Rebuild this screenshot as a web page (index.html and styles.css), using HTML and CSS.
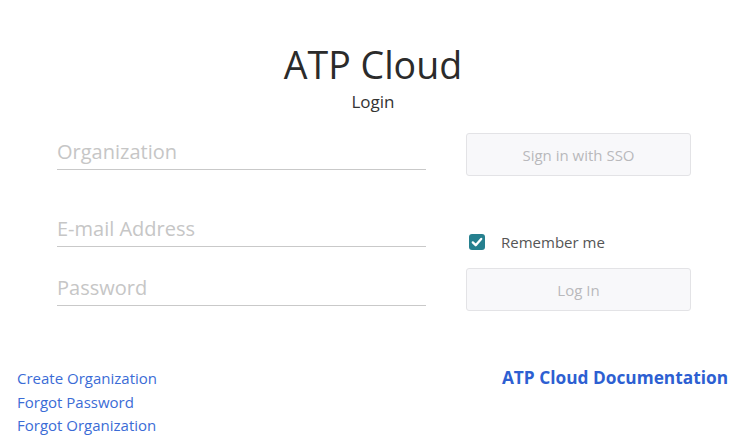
FILE: index.html
```html
<!DOCTYPE html>
<html lang="en">
<head>
<meta charset="utf-8">
<title>ATP Cloud – Login</title>
<link rel="stylesheet" href="styles.css">
</head>
<body>
  <main class="page">
    <header class="brand">
      <h1 class="brand-title">ATP Cloud</h1>
      <p class="brand-sub">Login</p>
    </header>

    <form class="login-form" onsubmit="return false">
      <div class="col col-fields">
        <input class="field field-org" type="text" placeholder="Organization">
        <input class="field field-email" type="email" placeholder="E-mail Address">
        <input class="field field-pass" type="password" placeholder="Password">
      </div>
      <div class="col col-actions">
        <button class="btn btn-sso" type="button" disabled>Sign in with SSO</button>
        <label class="remember">
          <span class="check" aria-hidden="true">
            <svg viewBox="0 0 16 16" width="16" height="16"><path d="M3.8 8.4 L6.7 11.2 L12.2 4.9" fill="none" stroke="#fff" stroke-width="2.3" stroke-linecap="round" stroke-linejoin="round"/></svg>
          </span>
          <span class="remember-text">Remember me</span>
        </label>
        <button class="btn btn-login" type="submit" disabled>Log In</button>
      </div>
    </form>

    <footer class="links">
      <nav class="links-left">
        <a href="#">Create Organization</a>
        <a href="#">Forgot Password</a>
        <a href="#">Forgot Organization</a>
      </nav>
      <a class="doc-link" href="#">ATP Cloud Documentation</a>
    </footer>
  </main>
</body>
</html>
```

FILE: styles.css
```css
* {
  box-sizing: border-box;
}

html, body {
  margin: 0;
  padding: 0;
  background: #fff;
}

body {
  font-family: "Open Sans", "Noto Sans", sans-serif;
  color: #333;
  width: 750px;
  height: 445px;
  overflow: hidden;
}

.page {
  display: flex;
  flex-direction: column;
  padding-top: 41px;
}

/* heading */
.brand {
  display: flex;
  flex-direction: column;
  align-items: center;
  padding-right: 4px;
}

.brand-title {
  margin: 0;
  font-size: 37.5px;
  line-height: 47px;
  font-weight: 400;
  color: #2b2b2b;
}

.brand-sub {
  margin: 2px 0 0;
  font-size: 17px;
  line-height: 23px;
  color: #333;
}

/* form */
.login-form {
  display: flex;
  gap: 40px;
  padding-left: 57px;
  margin-top: 20px;
}

.col {
  display: flex;
  flex-direction: column;
}

.col-fields {
  width: 369px;
}

.col-actions {
  width: 225px;
}

.field {
  display: block;
  width: 100%;
  height: 37px;
  padding: 0;
  border: none;
  border-bottom: 1px solid #c9c9c9;
  font-family: inherit;
  font-size: 20px;
  color: #333;
  background: transparent;
  outline: none;
}

.field::placeholder {
  color: #c6c6c6;
  opacity: 1;
}

.field-email {
  margin-top: 40px;
}

.field-pass {
  margin-top: 22px;
}

.btn {
  display: block;
  width: 225px;
  height: 43px;
  padding: 0;
  border: 1px solid #e3e3e6;
  border-radius: 3px;
  background: #f8f8fa;
  font-family: inherit;
  font-size: 15px;
  color: #b9b9bc;
}

.remember {
  display: flex;
  align-items: center;
  margin-top: 58px;
  padding-left: 3px;
  height: 16px;
  cursor: pointer;
}

.check {
  display: flex;
  width: 16px;
  height: 16px;
  border-radius: 3px;
  background: #26808f;
}

.remember-text {
  margin-left: 16px;
  font-size: 15px;
  line-height: 16px;
  color: #555;
}

.btn-login {
  margin-top: 18px;
}

/* footer links */
.links {
  display: flex;
  justify-content: space-between;
  align-items: flex-start;
  padding: 0 22px 0 17px;
  margin-top: 56px;
}

.links-left {
  display: flex;
  flex-direction: column;
}

.links-left a {
  font-size: 15px;
  line-height: 23.5px;
  color: #3b6cd6;
  text-decoration: none;
}

.doc-link {
  font-size: 17.3px;
  line-height: 22px;
  font-weight: 700;
  color: #2d5fd2;
  text-decoration: none;
}
```
